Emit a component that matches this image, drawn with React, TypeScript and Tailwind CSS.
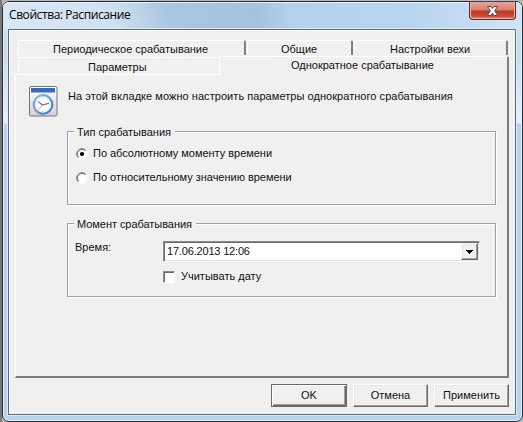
import type { ReactNode } from "react";

function GroupBox({ title, titleClass, children }: { title: string; titleClass: string; children: ReactNode }) {
  return (
    <fieldset className="relative h-[74px] w-[429px] border border-[#a0a0a0] shadow-[1px_1px_0_#fff,inset_1px_1px_0_#fff]">
      <legend className={`absolute -top-[6px] left-[6px] h-[13px] bg-[#f0f0f0] pl-[3px] ${titleClass}`}>{title}</legend>
      {children}
    </fieldset>
  );
}

function Radio({ checked }: { checked?: boolean }) {
  return (
    <svg width="12" height="12" viewBox="0 0 12 12" className="shrink-0">
      <circle cx="6" cy="6" r="5.5" fill="#fff" stroke="#fafafa" />
      <path d="M2.1 9.9A5.5 5.5 0 0 1 9.9 2.1" fill="none" stroke="#8e8e8e" />
      <path d="M2.8 9.2A4.5 4.5 0 0 1 9.2 2.8" fill="none" stroke="#707070" />
      {checked && <circle cx="6" cy="6" r="2.1" fill="#000" />}
    </svg>
  );
}

function ScheduleIcon() {
  return (
    <svg width="29" height="31" viewBox="0 0 29 31">
      <defs>
        <linearGradient id="sheet" x1="0" y1="0" x2="0" y2="1">
          <stop offset="0" stopColor="#fff" />
          <stop offset="1" stopColor="#d2d2d2" />
        </linearGradient>
        <linearGradient id="ring" x1="0" y1="0" x2="1" y2="1">
          <stop offset="0" stopColor="#91b5ee" />
          <stop offset="1" stopColor="#3b74cf" />
        </linearGradient>
      </defs>
      <rect x="0.5" y="0.5" width="27.5" height="29.5" rx="1.5" fill="url(#sheet)" stroke="#747474" />
      <rect x="2" y="2" width="24" height="4.5" fill="#356cc0" />
      <circle cx="14" cy="18.5" r="9.3" fill="#fff" stroke="url(#ring)" strokeWidth="2.2" />
      <circle cx="14" cy="18.5" r="7.2" fill="none" stroke="#879bb8" strokeWidth="0.9" strokeDasharray="0.8 2.97" />
      <path d="M13.6 19L9 15.6M13.6 19L20 17.2" stroke="#54647b" strokeWidth="1.1" />
      <path d="M13.6 19L9.4 23.2" stroke="#ef8c80" strokeWidth="1" />
    </svg>
  );
}

const raised = "border border-t-white border-l-white border-r-[#696969] border-b-[#696969] shadow-[inset_-1px_-1px_0_#a0a0a0,inset_1px_1px_0_#e8e8e8]";
const tabRight = "border-t border-l border-white border-r-2 border-r-[#808080] rounded-t-[2px]";

export default function App() {
  return (
    <div className="h-[422px] w-[523px] overflow-hidden bg-[linear-gradient(90deg,#777_0_2px,#b8b8b8_2px)] pt-px pl-[2px] font-['Liberation_Sans',Arial,sans-serif] text-[11px] leading-[13px] whitespace-nowrap text-[#111]">
      <div className="flex h-[421px] w-[521px] flex-col rounded-[7px] border border-[#292c35] bg-[#b9d3ed] bg-[linear-gradient(180deg,#d9e8f6_0,#c3d9ee_45px,#e7f0f8_121px,#b6d2ec_122px,#b6d2ec_100%)] shadow-[inset_0_0_0_1px_#e5f2fc]">
        <header className="flex h-[27px] shrink-0 justify-between rounded-t-[6px] bg-[linear-gradient(75deg,#d9e8f5_0,#cfe0f0_110px,#a9c5e0_165px,#a5c1dd_250px,#b5d1eb_282px,#b7d3ed_390px,#c8dff4_470px,#d3e6f7_100%)] pl-[6px] shadow-[inset_0_1px_0_#e5f2fc]">
          <h1 className="pt-[5px] font-['Open_Sans','Noto_Sans',sans-serif] text-[12px] leading-[16px] tracking-[-0.42px] text-black">Свойства: Расписание</h1>
          <button className="mr-[6px] flex h-[18px] w-[47px] items-center justify-center rounded-b-[4px] border border-t-0 border-[#5c2527] bg-[linear-gradient(180deg,#e7a596_0,#d6806f_8px,#bf3826_9px,#c94b35_14px,#e18b73_17px)] shadow-[inset_1px_-1px_0_#efb6a9,inset_-1px_0_0_#efb6a9,0_0_1px_#fff]">
            <svg width="13" height="12" viewBox="0 0 13 12">
              <path d="M1.5 1.5H5L6.5 3.5L8 1.5H11.5L8.7 5.8L11.5 10.5H8L6.5 8L5 10.5H1.5L4.3 5.8Z" fill="#fff" stroke="#5b4a54" />
            </svg>
          </button>
        </header>
        <main className="ml-[5px] flex h-[386px] w-[508px] shrink-0 flex-col border border-[#596b7d] bg-[#f0f0f0] pt-[10px] pl-[6px] shadow-[0_0_0_1px_#dcebf8,inset_0_1px_0_#fff,inset_1px_0_0_#fff]">
          <nav className="ml-[3px] flex h-[16px] shrink-0 gap-px">
            <div className={`h-[15px] w-[228px] pt-[2px] pl-[34px] ${tabRight}`}>Периодическое срабатывание</div>
            <div className={`h-[15px] w-[106px] pt-[2px] pl-[33px] ${tabRight}`}>Общие</div>
            <div className={`h-[15px] w-[154px] pt-[2px] pl-[35px] ${tabRight}`}>Настройки вехи</div>
          </nav>
          <nav className="flex h-[19px] w-[494px] shrink-0 items-end">
            <div className="w-[204px] border-b border-white pl-[3px]">
              <div className="h-[17px] rounded-tl-[2px] border-t border-l border-white pt-[3px] pl-[69px]">Параметры</div>
            </div>
            <div className={`h-[19px] w-[290px] pt-[2px] pl-[71px] ${tabRight}`}>Однократное срабатывание</div>
          </nav>
          <section className="h-[303px] w-[494px] shrink-0 border-r-2 border-b-2 border-l border-r-[#7c7c7c] border-b-[#7c7c7c] border-l-white">
            <div className="flex h-[56px] pt-[11px] pl-[13px]">
              <ScheduleIcon />
              <p className="pt-[4px] pl-[10px] tracking-[0.05px]">На этой вкладке можно настроить параметры однократного срабатывания</p>
            </div>
            <div className="flex flex-col gap-[18px] pl-[51px]">
              <GroupBox title="Тип срабатывания" titleClass="w-[101px]">
                <div className="flex flex-col gap-[11px] pt-[15px] pl-[8px]">
                  <label className="flex h-[13px] items-center gap-[5px] tracking-[-0.03px]"><Radio checked />По абсолютному моменту времени</label>
                  <label className="flex h-[13px] items-center gap-[5px] tracking-[-0.02px]"><Radio />По относительному значению времени</label>
                </div>
              </GroupBox>
              <GroupBox title="Момент срабатывания" titleClass="w-[122px] tracking-[-0.05px]">
                <div className="flex pt-[17px] pl-[7px]">
                  <span className="w-[88px]">Время:</span>
                  <div className="flex h-[21px] w-[317px] justify-between border border-t-[#8c8c8c] border-r-white border-b-white border-l-[#8c8c8c] bg-white shadow-[inset_1px_1px_0_#696969,inset_-1px_-1px_0_#e3e3e3]">
                    <span className="pt-[3px] pl-[3px] tracking-[-0.18px]">17.06.2013 12:06</span>
                    <button className={`mt-px mr-px flex h-[17px] w-[17px] items-center justify-center bg-[#f0f0f0] ${raised}`}>
                      <svg width="7" height="4" viewBox="0 0 7 4" shapeRendering="crispEdges"><path d="M0 0H7L3.5 4Z" /></svg>
                    </button>
                  </div>
                </div>
                <label className="flex items-center gap-[6px] pt-[8px] pl-[95px]">
                  <span className="size-[12px] border border-t-[#8c8c8c] border-r-white border-b-white border-l-[#8c8c8c] bg-white shadow-[inset_1px_1px_0_#696969]" />
                  Учитывать дату
                </label>
              </GroupBox>
            </div>
          </section>
          <footer className="flex shrink-0 justify-end gap-[6px] pt-[6px] pr-[6px]">
            <button className="h-[23px] w-[76px] border border-[#696969] bg-[#f0f0f0] shadow-[inset_1px_1px_0_#fff,inset_-1px_-1px_0_#696969,inset_-2px_-2px_0_#a0a0a0]">OK</button>
            <button className={`h-[23px] w-[75px] bg-[#f0f0f0] ${raised}`}>Отмена</button>
            <button className={`h-[23px] w-[75px] bg-[#f0f0f0] ${raised}`}>Применить</button>
          </footer>
        </main>
      </div>
    </div>
  );
}
